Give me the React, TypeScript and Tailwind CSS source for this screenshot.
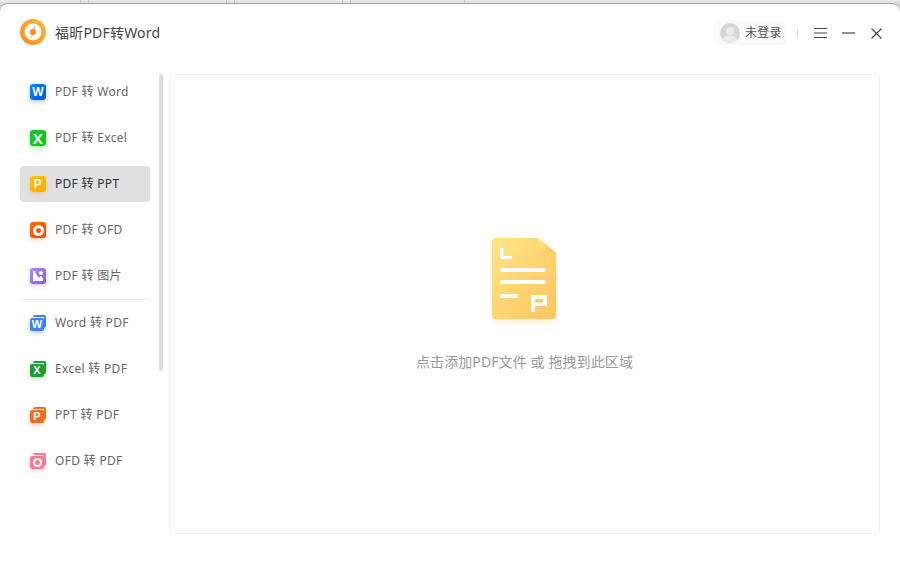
import React from "react";

const font = { fontFamily: '"Noto Sans", "Noto Sans CJK SC", sans-serif' };

function Logo() {
  return (
    <svg width="26" height="26" viewBox="0 0 26 26">
      <defs>
        <linearGradient id="lg" x1="0" y1="1" x2="1" y2="0">
          <stop offset="0" stopColor="#f78f20" />
          <stop offset="1" stopColor="#fbb63f" />
        </linearGradient>
      </defs>
      <circle cx="13" cy="13" r="13" fill="url(#lg)" />
      <circle cx="13" cy="13" r="8.4" fill="#fff" />
      <path d="M16 5.4 L11.6 10.6 L14.6 10.8 Z" fill="#fbc98c" />
      <path d="M10 20.6 L14.4 15.4 L11.4 15.2 Z" fill="#fbc98c" />
      <circle cx="13" cy="13" r="3.1" fill="#f7941f" />
    </svg>
  );
}

function Front({ bg, shadow, letter, image, size }: { bg: string; shadow: string; letter?: string; image?: boolean; size?: string }) {
  return (
    <div className="relative flex h-4 w-4 shrink-0 items-center justify-center rounded-[3px]" style={{ background: bg, boxShadow: `0 2px 5px ${shadow}` }}>
      {image ? (
        <svg className="absolute inset-0" width="16" height="16" viewBox="0 0 16 16">
          <circle cx="11" cy="5" r="2" fill="#fff" />
          <path d="M3 3 L5.5 3 L5 4 L8.4 9.4 L10.8 8 L13 10 V13 H3 Z" fill="#fff" />
        </svg>
      ) : letter === "O" ? (
        <div className="h-[11px] w-[11px] rounded-full border-[3px] border-white" />
      ) : (
        <span className={`${size ?? "text-[12px]"} font-bold leading-none text-white`} style={{ fontFamily: '"Liberation Sans", sans-serif' }}>{letter}</span>
      )}
    </div>
  );
}

function Doubled({ bg, back, shadow, letter }: { bg: string; back: string; shadow: string; letter: string }) {
  return (
    <div className="relative h-4 w-4 shrink-0">
      <div className="absolute right-0 top-0 h-[13px] w-[13px] rounded-[2px] border-t-[2px] border-r-[2px]" style={{ borderColor: back }} />
      <div className="absolute bottom-0 left-0 flex h-[13px] w-[14px] items-center justify-center rounded-[2px]" style={{ background: bg, boxShadow: `0 2px 5px ${shadow}` }}>
        {letter === "O" ? (
          <div className="h-[9px] w-[9px] rounded-full border-[2px] border-white" />
        ) : (
          <span className="text-[11px] font-bold leading-none text-white" style={{ fontFamily: '"Liberation Sans", sans-serif' }}>{letter}</span>
        )}
      </div>
    </div>
  );
}

function Item({ icon, label, active, className }: { icon: React.ReactNode; label: string; active?: boolean; className?: string }) {
  return (
    <div className={`flex h-9 w-[130px] items-center gap-[9px] rounded-[4px] pl-[10px] text-[12px] tracking-[0.3px] ${active ? "bg-[#e0e0e0] text-[#333333]" : "text-[#666666]"} ${className ?? ""}`}>
      {icon}
      <span className="whitespace-pre">{label}</span>
    </div>
  );
}

function DocIcon() {
  return (
    <svg width="80" height="96" viewBox="0 0 80 96">
      <defs>
        <linearGradient id="doc" x1="0" y1="0" x2="1" y2="1">
          <stop offset="0" stopColor="#ffe685" />
          <stop offset="1" stopColor="#ffc45e" />
        </linearGradient>
        <linearGradient id="fold" x1="0" y1="0" x2="1" y2="1">
          <stop offset="0" stopColor="#ffe98f" />
          <stop offset="1" stopColor="#ffc453" />
        </linearGradient>
        <filter id="sh" x="-20%" y="-20%" width="140%" height="140%">
          <feDropShadow dx="0" dy="3" stdDeviation="3" floodColor="#ffcf70" floodOpacity="0.35" />
        </filter>
      </defs>
      <path d="M11 8 H54 L72 23 V85 Q72 89 68 89 H12 Q8 89 8 85 V11 Q8 8 11 8 Z" fill="url(#doc)" filter="url(#sh)" />
      <path d="M54 8 L72 23 H59 Q54 23 54 18 Z" fill="url(#fold)" />
      <g fill="#fff">
        <path d="M16 18 H19.5 V26 H28 V29 H18 Q16 29 16 27 Z" />
        <rect x="16" y="38" width="46" height="4" rx="2" />
        <rect x="16" y="50" width="46" height="4" rx="2" />
        <rect x="16" y="64" width="18" height="4" rx="2" />
        <path d="M47 65 H63 V76 H51 V82 H47 Z M51 69 V72.5 H59 V69 Z" fillRule="evenodd" />
      </g>
    </svg>
  );
}

export default function App() {
  return (
    <div className="flex h-[561px] w-[900px] flex-col overflow-hidden bg-gradient-to-b from-[#ececec] via-[#b4b4b4] via-[12px] to-[#ffffff] to-[14px]" style={font}>
      <div className="flex h-[3px] shrink-0">
        <div className="w-[81px] border-r border-[#c4c4c4]" />
        <div className="w-[8px] border-r border-[#c4c4c4]" />
        <div className="w-[138px] border-r border-[#c4c4c4]" />
        <div className="w-[8px] border-r border-[#c4c4c4]" />
        <div className="w-[108px] border-r border-[#c4c4c4]" />
        <div className="w-[8px] border-r border-[#c4c4c4]" />
        <div className="w-[114px] border-r border-[#c4c4c4]" />
      </div>
      <div className="flex min-h-0 flex-1 flex-col rounded-t-[8px] border-t border-[#a8a8a8] bg-white">
        <header className="flex h-[70px] shrink-0 items-center pb-[14px] pl-5 pr-[18px]">
          <Logo />
          <span className="ml-[9px] text-[14px] tracking-[0.2px] text-[#444444]">福昕PDF转Word</span>
          <div className="ml-auto flex items-center pt-[2px]">
            <div className="flex h-6 w-[73px] items-center gap-[5px] rounded-[6px] bg-[#f9f9f9] pl-[6px] text-[12px] tracking-[0.3px] text-[#555555]">
              <svg width="20" height="20" viewBox="0 0 20 20">
                <circle cx="10" cy="10" r="10" fill="#d6d6d6" />
                <circle cx="10" cy="8" r="4" fill="#ececec" />
                <path d="M3 16.5 Q4 12.5 10 12.5 Q16 12.5 17 16.5 Q14 20 10 20 Q6 20 3 16.5 Z" fill="#ececec" />
              </svg>
              <span>未登录</span>
            </div>
            <div className="ml-[10px] h-2 w-px bg-[#d8d8d8]" />
            <svg className="ml-4" width="13" height="10" viewBox="0 0 13 10" stroke="#444" strokeWidth="1">
              <path d="M0 .5H13M0 5H13M0 9.5H13" />
            </svg>
            <svg className="ml-[15px]" width="13" height="2" viewBox="0 0 13 2" stroke="#444" strokeWidth="1.2">
              <path d="M0 1H13" />
            </svg>
            <svg className="ml-[16px]" width="11" height="11" viewBox="0 0 11 11" stroke="#444" strokeWidth="1.1">
              <path d="M.5 .5L10.5 10.5M10.5 .5L.5 10.5" />
            </svg>
          </div>
        </header>
        <div className="flex min-h-0 flex-1 pb-[27px] pl-5 pr-5">
          <nav className="relative w-[149px] shrink-0">
            <div className="flex w-[130px] flex-col gap-[10px]">
              <Item label="PDF 转 Word" icon={<Front bg="linear-gradient(135deg,#0a84ff,#0058ee)" shadow="rgba(10,100,255,.3)" letter="W" />} />
              <Item label="PDF 转 Excel" icon={<Front bg="#10c81e" shadow="rgba(16,200,30,.3)" letter="X" size="text-[15px]" />} />
              <Item label="PDF 转 PPT" active icon={<Front bg="linear-gradient(135deg,#ffc400,#ffa800)" shadow="rgba(255,140,50,.3)" letter="P" />} />
              <Item label="PDF 转 OFD" icon={<Front bg="linear-gradient(135deg,#ff6a10,#f44800)" shadow="rgba(255,90,20,.25)" letter="O" />} />
              <Item label="PDF 转 图片" icon={<Front bg="linear-gradient(135deg,#a98bfa,#7d5cf5)" shadow="rgba(125,92,245,.3)" image />} />
            </div>
            <div className="mt-[5px] h-px w-[130px] bg-[#ececec]" />
            <div className="mt-[5px] flex w-[130px] flex-col gap-[10px]">
              <Item label="Word 转 PDF" icon={<Doubled bg="#3f80f8" back="#3f80f8" shadow="rgba(63,128,248,.35)" letter="W" />} />
              <Item label="Excel 转 PDF" icon={<Doubled bg="#1aa12a" back="#1aa12a" shadow="rgba(26,161,42,.3)" letter="X" />} />
              <Item label="PPT 转 PDF" icon={<Doubled bg="#fb6a1a" back="#fb6a1a" shadow="rgba(251,106,26,.3)" letter="P" />} />
              <Item label="OFD 转 PDF" icon={<Doubled bg="#fb7c8e" back="#fb7c8e" shadow="rgba(251,124,142,.35)" letter="O" />} />
            </div>
            <div className="absolute left-[139px] top-0 h-[297px] w-1 rounded-[2px] bg-[#dcdcdc]" />
          </nav>
          <main className="flex min-w-0 flex-1 flex-col items-center rounded-[4px] border border-[#eeeeee] pt-[155px]">
            <div className="pr-[2px]">
              <DocIcon />
            </div>
            <div className="mt-[26px] text-[14px] leading-5 tracking-[0.1px] text-[#999999]">点击添加PDF文件 或 拖拽到此区域</div>
          </main>
        </div>
      </div>
    </div>
  );
}
